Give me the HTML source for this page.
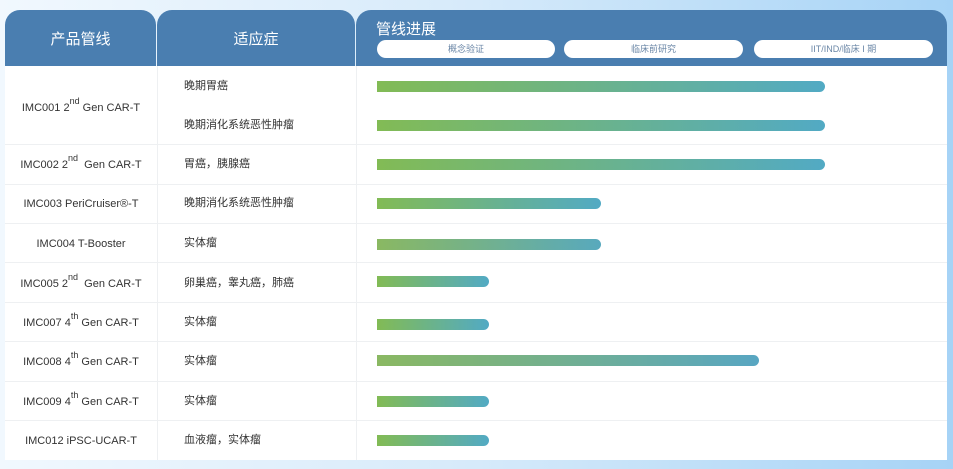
<!DOCTYPE html>
<html><head><meta charset="utf-8"><style>
*{margin:0;padding:0;box-sizing:border-box}
body{width:953px;height:469px;overflow:hidden;background:linear-gradient(90deg,#f1f8fe 0%,#d6eafa 50%,#a6d3f6 100%);font-family:"Liberation Sans","Noto Sans CJK SC",sans-serif;position:relative}
.a{position:absolute}
.hd{background:#4a7eb0;top:10px;height:56px;border-radius:15px 15px 0 0;color:#fff}
.body{left:5px;top:66px;width:942px;height:394px;background:#fff}
.vl{width:1px;background:#eef0f2;top:66px;height:394px}
.hl{left:5px;width:942px;height:1px;background:#eef0f2}
.c1{left:5px;width:152px;text-align:center;font-size:11px;color:#333;line-height:14px}
.c1 sup{font-size:9px;vertical-align:7px;line-height:0}
.c2{left:184px;font-size:11px;color:#333;line-height:14px}
.bar{left:377px;height:11px;border-radius:0 6px 6px 0;background:linear-gradient(90deg,#82bb55,#52aac4)}
.pill{top:40px;height:18px;background:#fff;border-radius:9px;font-size:9px;color:#6a86a6;text-align:center;line-height:18px}
</style></head><body>
<div class="a hd" style="left:5px;width:151px;font-size:15px;text-align:center;line-height:60px">产品管线</div>
<div class="a hd" style="left:157px;width:198px;font-size:15px;text-align:center;line-height:60px">适应症</div>
<div class="a hd" style="left:356px;width:591px"><div class="a" style="left:20px;top:8px;font-size:15px">管线进展</div></div>
<div class="a pill" style="left:377px;width:178px">概念验证</div>
<div class="a pill" style="left:564px;width:179px">临床前研究</div>
<div class="a pill" style="left:754px;width:179px">IIT/IND/临床 I 期</div>
<div class="a body"></div>
<div class="a vl" style="left:157px"></div>
<div class="a vl" style="left:356px"></div>
<div class="a hl" style="top:144px"></div>
<div class="a hl" style="top:184px"></div>
<div class="a hl" style="top:223px"></div>
<div class="a hl" style="top:262px"></div>
<div class="a hl" style="top:302px"></div>
<div class="a hl" style="top:341px"></div>
<div class="a hl" style="top:381px"></div>
<div class="a hl" style="top:420px"></div>

<div class="a c1" style="top:101px">IMC001 2<sup>nd</sup> Gen CAR-T</div>
<div class="a c1" style="top:158px">IMC002 2<sup>nd</sup> &nbsp;Gen CAR-T</div>
<div class="a c1" style="top:197px">IMC003 PeriCruiser®-T</div>
<div class="a c1" style="top:237px">IMC004 T-Booster</div>
<div class="a c1" style="top:277px">IMC005 2<sup>nd</sup> &nbsp;Gen CAR-T</div>
<div class="a c1" style="top:316px">IMC007 4<sup>th</sup> Gen CAR-T</div>
<div class="a c1" style="top:355px">IMC008 4<sup>th</sup> Gen CAR-T</div>
<div class="a c1" style="top:395px">IMC009 4<sup>th</sup> Gen CAR-T</div>
<div class="a c1" style="top:434px">IMC012 iPSC-UCAR-T</div>

<div class="a c2" style="top:79px">晚期胃癌</div>
<div class="a c2" style="top:118px">晚期消化系统恶性肿瘤</div>
<div class="a c2" style="top:157px">胃癌，胰腺癌</div>
<div class="a c2" style="top:196px">晚期消化系统恶性肿瘤</div>
<div class="a c2" style="top:236px">实体瘤</div>
<div class="a c2" style="top:276px">卵巢癌，睾丸癌，肺癌</div>
<div class="a c2" style="top:315px">实体瘤</div>
<div class="a c2" style="top:354px">实体瘤</div>
<div class="a c2" style="top:394px">实体瘤</div>
<div class="a c2" style="top:433px">血液瘤，实体瘤</div>

<div class="a bar" style="top:81px;width:448px"></div>
<div class="a bar" style="top:120px;width:448px"></div>
<div class="a bar" style="top:159px;width:448px"></div>
<div class="a bar" style="top:198px;width:224px"></div>
<div class="a bar" style="top:239px;width:224px;background:linear-gradient(90deg,#8ab862,#58a9bd)"></div>
<div class="a bar" style="top:276px;width:112px"></div>
<div class="a bar" style="top:319px;width:112px"></div>
<div class="a bar" style="top:355px;width:382px;background:linear-gradient(90deg,#8ab862,#58a6c2)"></div>
<div class="a bar" style="top:396px;width:112px"></div>
<div class="a bar" style="top:435px;width:112px"></div>
</body></html>
